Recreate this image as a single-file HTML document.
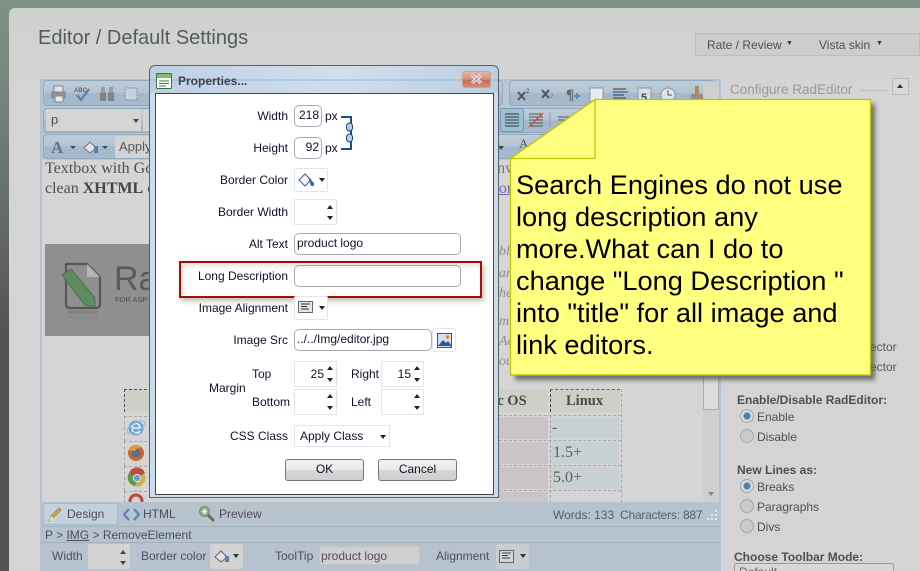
<!DOCTYPE html>
<html><head><meta charset="utf-8"><style>
html,body{margin:0;padding:0;width:920px;height:571px;overflow:hidden}
#w{left:0;top:0;width:920px;height:571px;overflow:hidden;background:#5a5a5a;font-family:"Liberation Sans",sans-serif;font-size:12px;color:#4f4f4f}
div,span,svg{position:absolute;box-sizing:border-box}
.t{white-space:nowrap;line-height:16px}
.r{text-align:right}
.d{color:#10102a}
.s{font-family:"Liberation Serif",serif;font-size:16px;color:#4f4f4f;white-space:nowrap;line-height:18px}
.tb{background:linear-gradient(#c0ccd8,#b4c5d4 45%,#a3b8cb 55%,#a6bacc);border:1px solid #90a9bd;border-radius:4px}
.in{background:#fff;border:1px solid #ababab;border-radius:5px;color:#10102a;line-height:19px;white-space:nowrap}
.sp{background:#fff;border:1px solid #e0e6ec}
.up{width:0;height:0;border:3px solid transparent;border-top:0;border-bottom:4px solid #222}
.dn{width:0;height:0;border:3px solid transparent;border-bottom:0;border-top:4px solid #222}
.btn{border:1px solid #777;border-radius:3px;background:linear-gradient(#f2f2f2 0,#ebebeb 48%,#d6d6d6 52%,#cfcfcf);text-align:center;line-height:19px;color:#10102a}
.cell{border:1px dashed #a8a8a8}
.rad{width:14px;height:14px;border-radius:50%;border:1px solid #a8a8a8;background:#cacaca}
.rad.on{background:radial-gradient(circle,#4a84a8 0 3px,#d9d9d9 4px)}
.i{font-style:italic;color:#8f8f8f;font-size:14px}
</style></head><body>
<div id="w">
<div style="left:0;top:0;width:920px;height:571px;background:linear-gradient(#7f9085,#7c8a80 10%,#525252 60%,#525252)"></div>
<div style="left:9px;top:8px;width:911px;height:563px;background:linear-gradient(#cfd1d0,#d4d4d4 90px);border-top-left-radius:6px"></div>

<span class="t" style="left:38px;top:25px;font-size:20px;line-height:26px;color:#555a5e">Editor / Default Settings</span>

<div style="left:695px;top:33px;width:225px;height:23px;background:#cdcdcd;border:1px solid #bdbdbd"></div>
<span class="t" style="left:707px;top:37px;color:#505050">Rate / Review</span>
<span class="t" style="left:786px;top:36px;font-size:7px;color:#333">▼</span>
<span class="t" style="left:819px;top:37px;color:#505050">Vista skin</span>
<span class="t" style="left:876px;top:36px;font-size:7px;color:#333">▼</span>

<!-- editor -->
<div style="left:40px;top:79px;width:681px;height:492px;background:#d5d5d5;border:2px solid #b2c2d0;border-bottom:0"></div>
<div style="left:42px;top:81px;width:677px;height:79px;background:#b9c8d4"></div>
<div class="tb" style="left:43px;top:80px;width:460px;height:26px"></div>
<div class="tb" style="left:509px;top:80px;width:205px;height:26px"></div>
<div class="tb" style="left:43px;top:108px;width:668px;height:25px"></div>
<div class="tb" style="left:43px;top:134px;width:668px;height:25px"></div>

<!-- toolbar row 1 icons -->
<svg style="left:50px;top:84px" width="90" height="20" viewBox="0 0 90 20">
<rect x="1" y="7" width="15" height="8" rx="2" fill="#8f9396"/><rect x="4" y="2" width="9" height="6" fill="#dfe2e4" stroke="#84888a"/><rect x="5" y="12" width="8" height="6" fill="#e8e8e8" stroke="#888"/>
<path d="M27 11l4 5 8-11" fill="none" stroke="#5c83ac" stroke-width="2.4"/>
<text x="24" y="8" font-size="6" font-weight="700" fill="#666" font-family="Liberation Sans">ABC</text>
<rect x="50" y="8" width="6" height="9" fill="#7f8488"/><rect x="58" y="8" width="6" height="9" fill="#7f8488"/><rect x="51" y="3" width="4" height="6" fill="#9a9ea2"/><rect x="59" y="3" width="4" height="6" fill="#9a9ea2"/>
<rect x="75" y="4" width="12" height="12" fill="#c5d2dd" stroke="#7f8e9b" stroke-dasharray="2 1"/>
</svg>
<!-- row 1 right icons -->
<svg style="left:515px;top:84px" width="195" height="22" viewBox="0 0 195 22">
<path d="M3 8l7 8M10 8l-7 8" stroke="#555" stroke-width="2"/><text x="11" y="9" font-size="6" fill="#444" font-family="Liberation Sans">2</text>
<path d="M27 6l7 8M34 6l-7 8" stroke="#555" stroke-width="2"/><text x="35" y="14" font-size="6" fill="#5a7fa8" font-family="Liberation Sans">2</text>
<text x="51" y="15" font-size="15" font-weight="700" fill="#666" font-family="Liberation Serif">¶</text><path d="M62 9v6M59 12h6" stroke="#5a88b8" stroke-width="2"/>
<rect x="75" y="4" width="13" height="15" fill="#e6ebef" stroke="#8a99a6"/>
<path d="M98 5h13M98 11h11M98 14h13" stroke="#555" stroke-width="1.300"/><rect x="98" y="7" width="15" height="2" fill="#5b85c0"/>
<rect x="123" y="4" width="13" height="15" fill="#d7e0e8" stroke="#8a99a6"/><text x="126" y="17" font-size="11" font-weight="700" fill="#444" font-family="Liberation Sans">5</text>
<circle cx="153" cy="11" r="7" fill="#dfe5ea" stroke="#8a949c"/><path d="M153 6v5h4" stroke="#555" fill="none"/>
<rect x="180" y="2" width="4" height="8" fill="#b08a5a"/><rect x="176" y="10" width="12" height="8" fill="#9a8c7c"/>
</svg>
<!-- row 2 -->
<div style="left:46px;top:109px;width:95px;height:22px;background:#d4d4d4"></div>
<span class="t" style="left:51px;top:112px;font-size:13px;color:#5a4a55">p</span>
<div class="dn" style="left:133px;top:119px;border-top-color:#444"></div>
<div style="left:143px;top:109px;width:9px;height:22px;background:#d4d4d4"></div>
<div style="left:500px;top:108px;width:24px;height:24px;background:#9cc0d6;border:1px solid #7698ad;border-radius:3px"></div>
<svg style="left:504px;top:112px" width="70" height="18" viewBox="0 0 70 18"><path d="M1 2h14M1 5h14M1 8h14M1 11h14M1 14h14" stroke="#333" stroke-width="1"/><path d="M25 2h14M25 5h14M25 8h14M25 11h14M25 14h14" stroke="#555" stroke-width="1"/><path d="M25 15L39 1" stroke="#c9543a" stroke-width="1.500"/><path d="M46 0v16" stroke="#8ba2b5"/><path d="M54 5h12M54 8h12" stroke="#556" stroke-width="1"/></svg>
<!-- row 3 -->
<svg style="left:50px;top:138px" width="62" height="18" viewBox="0 0 62 18">
<text x="1" y="15" font-size="17" font-weight="700" fill="#5f7488" font-family="Liberation Serif">A</text><path d="M20 8h6l-3 3z" fill="#444"/>
<path d="M34 10l6-6 6 6-6 5z" fill="#e2e2e2" stroke="#777"/><rect x="44" y="8" width="4" height="7" fill="#5b7fa6"/><path d="M52 8h6l-3 3z" fill="#444"/>
</svg>
<div style="left:115px;top:136px;width:36px;height:22px;background:#d4d4d4"></div>
<span class="t" style="left:119px;top:139px;font-size:13px;color:#5a5560">Apply</span>
<div class="dn" style="left:498px;top:146px;border-top-color:#444"></div>
<span class="t" style="left:519px;top:136px;font-size:13px;font-family:'Liberation Serif';color:#555">A</span>

<!-- content -->
<span class="s" style="left:45px;top:160px">Textbox with Goo</span>
<span class="s" style="left:45px;top:180px">clean <b style="color:#454545">XHTML</b> ou</span>
<span class="s" style="left:490px;top:160px;color:#777">env</span>
<span class="s" style="left:490px;top:180px;color:#6a6ac8;text-decoration:underline">itor</span>
<span class="s i" style="left:499px;top:243px">bl</span>
<span class="s i" style="left:499px;top:265px">an</span>
<span class="s i" style="left:499px;top:285px">he</span>
<span class="s i" style="left:499px;top:313px">m</span>
<span class="s i" style="left:499px;top:333px">Ac</span>
<span class="s i" style="left:499px;top:353px">ou</span>

<!-- logo -->
<div style="left:45px;top:244px;width:110px;height:92px;background:#8f8f8f"></div>
<svg style="left:58px;top:260px" width="50" height="64" viewBox="0 0 50 64">
<path d="M8 4h21l13 13v27q0 4-4 4H12q-4 0-4-4z" fill="#8d908d" stroke="#555955" stroke-width="2.200" stroke-linejoin="round"/>
<path d="M29 4v13h13z" fill="#b4b6b4"/>
<path d="M4 15l9-6 24 29 0 9-10-2z" fill="#5f8c5f" stroke="#4c6e4c"/>
<path d="M10 52h30" stroke="#7b7f7b" stroke-width="3" opacity=".7"/><path d="M10 57h30" stroke="#858885" stroke-width="2" opacity=".6"/>
</svg>
<span class="t" style="left:114px;top:260px;font-size:34px;line-height:38px;color:#5a5a5a">Ra</span>
<span class="t" style="left:115px;top:295px;font-size:7.500px;line-height:10px;color:#505050">FOR ASP</span>

<!-- table -->
<div style="left:124px;top:389px;width:28px;height:23px;background:#cdd0c6;border-left:1px dashed #555;border-top:1px dashed #555"></div>
<div class="cell" style="left:124px;top:416px;width:28px;height:25px;border-right:0;border-bottom:0"></div>
<div class="cell" style="left:124px;top:441px;width:28px;height:25px;border-right:0;border-bottom:0"></div>
<div class="cell" style="left:124px;top:466px;width:28px;height:25px;border-right:0;border-bottom:0"></div>
<div class="cell" style="left:124px;top:491px;width:28px;height:12px;border-right:0;border-bottom:0"></div>
<svg style="left:126px;top:417px" width="22" height="86" viewBox="0 0 22 86">
<circle cx="10" cy="11" r="7.500" fill="#6ba3cf"/><path d="M6 11h8M6 11c0-6 8-6 8 0M14 14c-2 3-7 3-8-2" stroke="#e8f2f8" fill="none" stroke-width="1.600"/><ellipse cx="10" cy="10" rx="10" ry="4" fill="none" stroke="#8fb8d8" transform="rotate(-30 10 10)"/>
<circle cx="10" cy="36" r="8" fill="#c46a32"/><circle cx="10" cy="36" r="4.500" fill="#5a6f90"/><path d="M3 33c3-6 10-6 14-2-3-1-7 0-8 3z" fill="#d9a03a"/>
<circle cx="11" cy="61" r="8.500" fill="#c5b44a"/><path d="M11 61L3 56a8.500 8.500 0 0 1 16 0z" fill="#bf4d3e"/><path d="M11 61L3 56a8.500 8.500 0 0 0 6 13z" fill="#5b9a55"/><circle cx="11" cy="61" r="3.600" fill="#6d9cc8" stroke="#e8e8e8"/>
<circle cx="10" cy="84" r="6" fill="none" stroke="#c0473c" stroke-width="3"/>
</svg>
<!-- right table part -->
<div style="left:499px;top:390px;width:49px;height:22px;background:#cdd0c6"></div>
<span class="s" style="left:490px;top:392px;font-weight:700;font-size:14.500px;color:#4a4a42">ac OS</span>
<div style="left:550px;top:389px;width:70px;height:23px;background:#cdd0c6;border-left:1px dashed #444;border-top:1px dashed #666"></div>
<span class="s" style="left:566px;top:392px;font-weight:700;font-size:14.500px;color:#4a4a42">Linux</span>
<div style="left:499px;top:417px;width:49px;height:22px;background:#c9c5c9"></div>
<div style="left:499px;top:442px;width:49px;height:22px;background:#c9c5c9"></div>
<div style="left:499px;top:467px;width:49px;height:22px;background:#c9c5c9"></div>
<div style="left:499px;top:492px;width:49px;height:11px;background:#c9c5c9"></div>
<div style="left:551px;top:417px;width:68px;height:22px;background:#c7d0d3"></div>
<div style="left:551px;top:442px;width:68px;height:22px;background:#c7d0d3"></div>
<div style="left:551px;top:467px;width:68px;height:22px;background:#c7d0d3"></div>
<div style="left:550px;top:415px;width:0;height:88px;border-left:1px dashed #a8a8a8"></div>
<div style="left:621px;top:389px;width:0;height:114px;border-left:1px dashed #a8a8a8"></div>
<div style="left:499px;top:415px;width:122px;border-top:1px dashed #a8a8a8;height:0"></div>
<div style="left:499px;top:440px;width:122px;border-top:1px dashed #a8a8a8;height:0"></div>
<div style="left:499px;top:465px;width:122px;border-top:1px dashed #a8a8a8;height:0"></div>
<div style="left:499px;top:490px;width:122px;border-top:1px dashed #a8a8a8;height:0"></div>
<span class="s" style="left:552px;top:419px;color:#5e5e5e">-</span>
<span class="s" style="left:553px;top:444px;color:#5e5e5e">1.5+</span>
<span class="s" style="left:553px;top:469px;color:#5e5e5e">5.0+</span>
<div style="left:703px;top:82px;width:16px;height:421px;background:#cfcfcf"></div>
<div style="left:703px;top:360px;width:16px;height:50px;background:#dcdcdc;border:1px solid #aaa;border-radius:2px"></div>
<div class="dn" style="left:708px;top:492px;border-top-color:#888"></div>

<!-- bottom bars -->
<div style="left:42px;top:502px;width:677px;height:69px;background:#b6c3ce"></div>
<div style="left:42px;top:526px;width:677px;height:1px;background:#a3b1bd"></div>
<div style="left:42px;top:542px;width:677px;height:1px;background:#a3b1bd"></div>
<div style="left:43px;top:503px;width:75px;height:22px;background:#c3d1dc;border:1px solid #a9bac7;border-radius:3px"></div>
<svg style="left:47px;top:506px" width="16" height="17" viewBox="0 0 16 17"><path d="M2 15l2-5 8-8 2 2-8 8z" fill="#d6a93e" stroke="#8a7a4a" stroke-width=".7"/><path d="M2 15l2-5 3 3z" fill="#e6dfc8"/></svg>
<span class="t" style="left:67px;top:506px;color:#4f4a5a">Design</span>
<svg style="left:123px;top:508px" width="17" height="13" viewBox="0 0 17 13"><path d="M6 1L1 6.500l5 5.500M11 1l5 5.500-5 5.500" fill="none" stroke="#5b86b4" stroke-width="2.400"/></svg>
<span class="t" style="left:143px;top:506px;color:#4f4a5a">HTML</span>
<svg style="left:198px;top:505px" width="18" height="18" viewBox="0 0 18 18"><circle cx="6.500" cy="6.500" r="5" fill="#8fb08f" stroke="#6d8f6d"/><path d="M4 6.500h5M6.500 4v5" stroke="#fff" stroke-width="1.500"/><path d="M10 10l6 6" stroke="#6b6b6b" stroke-width="3"/></svg>
<span class="t" style="left:219px;top:506px;color:#4f4a5a">Preview</span>
<span class="t" style="left:553px;top:507px;color:#555d68">Words: 133</span>
<span class="t" style="left:620px;top:507px;color:#555d68;letter-spacing:-.2px">Characters: 887</span>
<svg style="left:706px;top:509px" width="12" height="12" viewBox="0 0 12 12"><path d="M9 1h2v2H9zM5 5h2v2H5zM9 5h2v2H9zM1 9h2v2H1zM5 9h2v2H5zM9 9h2v2H9z" fill="#e2e8ee"/></svg>
<span class="t" style="left:45px;top:527px;color:#4c4f58">P &gt; <u>IMG</u> &gt; RemoveElement</span>

<span class="t" style="left:52px;top:548px;color:#4f4f5a">Width</span>
<div style="left:88px;top:544px;width:42px;height:25px;background:#d3d3d3"></div>
<div class="up" style="left:120px;top:550px;border-bottom-color:#444"></div><div class="dn" style="left:120px;top:561px;border-top-color:#444"></div>
<span class="t" style="left:141px;top:548px;color:#4f4f5a">Border color</span>
<div style="left:210px;top:544px;width:33px;height:25px;background:#d3d3d3;border-radius:3px"></div>
<svg style="left:214px;top:549px" width="16" height="15" viewBox="0 0 16 15"><path d="M1 8l6-6 6 6-6 5z" fill="#e2e2e2" stroke="#666"/><rect x="11" y="7" width="4" height="6" fill="#5b7fa6"/></svg>
<div class="dn" style="left:233px;top:554px;border-top-color:#333"></div>
<span class="t" style="left:275px;top:548px;color:#4f4f5a">ToolTip</span>
<div style="left:319px;top:546px;width:101px;height:19px;background:#cfcfcf;border:1px solid #c4c4c4"></div>
<span class="t" style="left:321px;top:548px;color:#5b4a58">product logo</span>
<span class="t" style="left:436px;top:548px;color:#4f4f5a">Alignment</span>
<div style="left:496px;top:544px;width:33px;height:25px;background:#c8cdd2;border-radius:3px"></div>
<svg style="left:499px;top:550px" width="16" height="13" viewBox="0 0 16 13"><rect x=".5" y=".5" width="14" height="12" fill="#d4d4d4" stroke="#666"/><path d="M3 3h9M3 5.500h6M3 8h8" stroke="#444"/></svg>
<div class="dn" style="left:520px;top:554px;border-top-color:#333"></div>

<!-- right panel -->
<div style="left:722px;top:79px;width:198px;height:492px;background:#d4d4d4"></div>
<span class="t" style="left:730px;top:81px;font-size:13.500px;line-height:18px;color:#9a9a9a">Configure RadEditor</span>
<div style="left:861px;top:90px;width:26px;border-top:1px dotted #aaa;height:0"></div>
<div style="left:892px;top:78px;width:17px;height:17px;background:#d8d8d8;border:1px solid #bbb"></div>
<div class="up" style="left:897px;top:84px;border-bottom-color:#333"></div>
<span class="t" style="left:870px;top:339px;color:#555">ector</span>
<span class="t" style="left:870px;top:359px;color:#555">ector</span>
<span class="t" style="left:737px;top:392px;font-weight:700;color:#4f4f4f">Enable/Disable RadEditor:</span>
<div class="rad on" style="left:740px;top:409px"></div><span class="t" style="left:757px;top:409px">Enable</span>
<div class="rad" style="left:740px;top:429px"></div><span class="t" style="left:757px;top:429px">Disable</span>
<span class="t" style="left:737px;top:462px;font-weight:700">New Lines as:</span>
<div class="rad on" style="left:740px;top:479px"></div><span class="t" style="left:757px;top:479px">Breaks</span>
<div class="rad" style="left:740px;top:499px"></div><span class="t" style="left:757px;top:499px">Paragraphs</span>
<div class="rad" style="left:740px;top:519px"></div><span class="t" style="left:757px;top:519px">Divs</span>
<span class="t" style="left:734px;top:549px;font-weight:700">Choose Toolbar Mode:</span>
<div style="left:734px;top:563px;width:160px;height:12px;background:#d8d8d8;border:1px solid #999;border-radius:3px"></div>
<span class="t" style="left:739px;top:564px;color:#666">Default</span>

<!-- dialog -->
<div style="left:149px;top:65px;width:350px;height:433px;border:1px solid #5c6066;border-radius:6px 6px 0 0;background:linear-gradient(100deg,rgba(188,208,226,.95),rgba(208,224,240,.92) 45%,rgba(178,198,218,.95))"></div>
<div style="left:150px;top:79px;width:348px;height:2px;background:rgba(130,165,195,.3)"></div>
<div style="left:150px;top:93px;width:348px;height:404px;background:#cbdcee"></div>
<svg style="left:156px;top:73px" width="17" height="16" viewBox="0 0 17 16"><rect x=".5" y=".5" width="15" height="15" rx="1" fill="#fff" stroke="#3d6d4a"/><rect x="1" y="1" width="14" height="4" fill="#7fc063"/><path d="M3 8h10M3 10.500h10M3 13h7" stroke="#2f7f3a"/></svg>
<span class="t" style="left:178px;top:73px;font-weight:700;color:#3a424c;font-size:12px">Properties...</span>
<div style="left:462px;top:71px;width:29px;height:17px;border:1px solid #c9a68a;border-radius:3px;background:linear-gradient(#e6b4a8,#d58d7e 48%,#c8685a 55%,#d68a78)"></div>
<svg style="left:469px;top:73px" width="15" height="13" viewBox="0 0 15 13"><path d="M3 2l9 8M12 2l-9 8" stroke="#ececec" stroke-width="3.200"/><path d="M3 2l9 8M12 2l-9 8" stroke="#999" stroke-width="1"/></svg>
<div style="left:155px;top:93px;width:339px;height:402px;background:#fff;border:1px solid #3e4449"></div>

<span class="t r d" style="left:180px;top:108px;width:108px">Width</span>
<div class="in" style="left:294px;top:105px;width:28px;height:22px;text-align:right;padding-right:2px">218</div>
<span class="t d" style="left:325px;top:108px">px</span>
<span class="t r d" style="left:180px;top:140px;width:108px">Height</span>
<div class="in" style="left:294px;top:137px;width:28px;height:22px;text-align:right;padding-right:2px">92</div>
<span class="t d" style="left:325px;top:140px">px</span>
<svg style="left:340px;top:115px" width="14" height="36" viewBox="0 0 14 36"><path d="M1 2h10v32H1" fill="none" stroke="#1c4a86" stroke-width="2"/><rect x="6.500" y="8" width="6" height="8" rx="3" fill="#b8cde0" stroke="#1c4a86"/><rect x="6.500" y="19" width="6" height="8" rx="3" fill="#b8cde0" stroke="#1c4a86"/></svg>

<span class="t r d" style="left:180px;top:172px;width:108px">Border Color</span>
<div class="sp" style="left:294px;top:168px;width:34px;height:24px;border-radius:2px"></div>
<svg style="left:298px;top:172px" width="18" height="16" viewBox="0 0 18 16"><path d="M1 8l6-6 6 6-6 6z" fill="#f4f4f4" stroke="#3c5f8a"/><path d="M10 5l6 6v3h-3z" fill="#3c6ea8"/></svg>
<div class="dn" style="left:319px;top:178px"></div>

<span class="t r d" style="left:180px;top:204px;width:108px">Border Width</span>
<div class="sp" style="left:294px;top:199px;width:43px;height:26px"></div>
<div class="up" style="left:327px;top:205px"></div><div class="dn" style="left:327px;top:216px"></div>

<span class="t r d" style="left:180px;top:236px;width:108px">Alt Text</span>
<div class="in" style="left:294px;top:233px;width:167px;height:22px;padding-left:2px">product logo</div>

<span class="t r d" style="left:180px;top:268px;width:108px">Long Description</span>
<div class="in" style="left:294px;top:265px;width:167px;height:22px"></div>
<div style="left:179px;top:261px;width:303px;height:37px;border:2px solid #aa0c0c;box-shadow:2px 3px 5px rgba(90,90,70,.4),inset 2px 3px 5px rgba(90,90,70,.18)"></div>

<span class="t r d" style="left:180px;top:300px;width:108px">Image Alignment</span>
<div class="sp" style="left:294px;top:296px;width:34px;height:24px;border-radius:2px"></div>
<svg style="left:298px;top:301px" width="16" height="13" viewBox="0 0 16 13"><rect x=".5" y=".5" width="14" height="11" fill="#dfe6ee" stroke="#666"/><path d="M3 3h9M3 5.500h6M3 8h8" stroke="#333"/></svg>
<div class="dn" style="left:319px;top:306px"></div>

<span class="t r d" style="left:180px;top:332px;width:108px">Image Src</span>
<div class="in" style="left:294px;top:329px;width:138px;height:22px;padding-left:2px">../../Img/editor.jpg</div>
<div class="sp" style="left:432px;top:328px;width:24px;height:24px;border-radius:3px"></div>
<svg style="left:437px;top:333px" width="15" height="15" viewBox="0 0 15 15"><rect x=".5" y=".5" width="14" height="14" fill="#cfe0f2" stroke="#33558c"/><path d="M1 13l5-6 3 3 2-2 3 4v1H1z" fill="#33558c"/><circle cx="10.500" cy="4" r="1.700" fill="#e8842c"/></svg>

<span class="t d" style="left:209px;top:380px">Margin</span>
<span class="t d" style="left:252px;top:366px">Top</span>
<div class="sp" style="left:294px;top:361px;width:43px;height:26px;text-align:right;padding-right:12px;line-height:24px;color:#10102a">25</div>
<div class="up" style="left:327px;top:366px"></div><div class="dn" style="left:327px;top:378px"></div>
<span class="t d" style="left:351px;top:366px">Right</span>
<div class="sp" style="left:381px;top:361px;width:43px;height:26px;text-align:right;padding-right:12px;line-height:24px;color:#10102a">15</div>
<div class="up" style="left:414px;top:366px"></div><div class="dn" style="left:414px;top:378px"></div>
<span class="t d" style="left:252px;top:394px">Bottom</span>
<div class="sp" style="left:294px;top:389px;width:43px;height:26px"></div>
<div class="up" style="left:327px;top:394px"></div><div class="dn" style="left:327px;top:406px"></div>
<span class="t d" style="left:351px;top:394px">Left</span>
<div class="sp" style="left:381px;top:389px;width:43px;height:26px"></div>
<div class="up" style="left:414px;top:394px"></div><div class="dn" style="left:414px;top:406px"></div>

<span class="t r d" style="left:180px;top:428px;width:108px">CSS Class</span>
<div class="sp" style="left:294px;top:425px;width:96px;height:22px;padding-left:5px;line-height:20px;color:#10102a">Apply Class</div>
<div class="dn" style="left:380px;top:435px"></div>
<div class="btn" style="left:285px;top:459px;width:79px;height:22px">OK</div>
<div class="btn" style="left:378px;top:459px;width:79px;height:22px">Cancel</div>

<!-- callout -->
<svg style="left:505px;top:95px" width="375" height="290" viewBox="0 0 375 290">
<defs><filter id="b" x="-5%" y="-5%" width="110%" height="110%"><feGaussianBlur stdDeviation="2.500"/></filter></defs>
<path d="M90 9H370V285H10V68z" fill="#555" opacity=".8" filter="url(#b)"/>
<path d="M90 4.500H365.500V280H5.500V63.500z" fill="#ffff80" stroke="#c4c400" stroke-width="1.300"/>
<path d="M90 4.500V63.500H5.500z" fill="#ffff80" stroke="#c4c400" stroke-width="1.300" stroke-linejoin="round"/>
</svg>
<div style="left:516px;top:169px;width:350px;font-size:27.200px;line-height:32px;color:#000;white-space:nowrap;font-family:'Liberation Sans',sans-serif">Search Engines do not use<br>long description any<br>more.What can I do to<br>change "Long Description "<br>into "title" for all image and<br>link editors.</div>
</div>
</body></html>
